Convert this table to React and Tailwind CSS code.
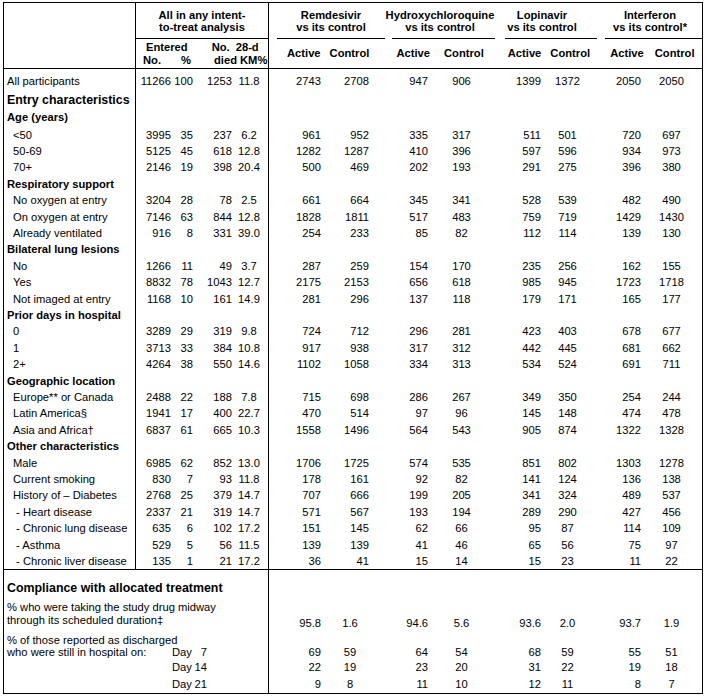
const LEFT = ['w-[35px] text-right', 'w-[22px] text-right', 'w-[39px] text-right', 'w-[34px] text-center']
const RIGHT = [
  'w-[52px] text-right',
  'w-[48px] text-right',
  'w-[59px] text-right',
  'w-[67px] text-center',
  'w-[46px] text-right',
  'w-[53px] text-center',
  'w-[47px] text-right',
  'w-[61px] text-center',
]
const RIGHT_BOTTOM = [
  'w-[52px] text-right',
  'w-[48px] pl-[10px] text-center',
  'w-[59px] text-right',
  'w-[67px] text-center',
  'w-[46px] text-right',
  'w-[53px] text-center',
  'w-[47px] text-right',
  'w-[61px] text-center',
]

const ROW_H = {
  all: 'h-[22px] leading-[24px]',
  h1: 'h-[18px] leading-[18px]',
  age: 'h-[17.5px] leading-[17.5px]',
  std: 'h-[16.42px] leading-[16.42px]',
}

const LABEL = {
  all: 'pl-[3px]',
  h1: 'pl-[3px] font-bold text-[12.4px]',
  h2: 'pl-[3px] font-bold',
  item: 'pl-[9px]',
}

const rows = [
  { label: 'All participants', kind: 'all', h: 'all', v: [11266, 100, 1253, '11.8', 2743, 2708, 947, 906, 1399, 1372, 2050, 2050] },
  { label: 'Entry characteristics', kind: 'h1', h: 'h1' },
  { label: 'Age (years)', kind: 'h2', h: 'age' },
  { label: '<50', v: [3995, 35, 237, '6.2', 961, 952, 335, 317, 511, 501, 720, 697] },
  { label: '50-69', v: [5125, 45, 618, '12.8', 1282, 1287, 410, 396, 597, 596, 934, 973] },
  { label: '70+', v: [2146, 19, 398, '20.4', 500, 469, 202, 193, 291, 275, 396, 380] },
  { label: 'Respiratory support', kind: 'h2' },
  { label: 'No oxygen at entry', v: [3204, 28, 78, '2.5', 661, 664, 345, 341, 528, 539, 482, 490] },
  { label: 'On oxygen at entry', v: [7146, 63, 844, '12.8', 1828, 1811, 517, 483, 759, 719, 1429, 1430] },
  { label: 'Already ventilated', v: [916, 8, 331, '39.0', 254, 233, 85, 82, 112, 114, 139, 130] },
  { label: 'Bilateral lung lesions', kind: 'h2' },
  { label: 'No', v: [1266, 11, 49, '3.7', 287, 259, 154, 170, 235, 256, 162, 155] },
  { label: 'Yes', v: [8832, 78, 1043, '12.7', 2175, 2153, 656, 618, 985, 945, 1723, 1718] },
  { label: 'Not imaged at entry', v: [1168, 10, 161, '14.9', 281, 296, 137, 118, 179, 171, 165, 177] },
  { label: 'Prior days in hospital', kind: 'h2' },
  { label: '0', v: [3289, 29, 319, '9.8', 724, 712, 296, 281, 423, 403, 678, 677] },
  { label: '1', v: [3713, 33, 384, '10.8', 917, 938, 317, 312, 442, 445, 681, 662] },
  { label: '2+', v: [4264, 38, 550, '14.6', 1102, 1058, 334, 313, 534, 524, 691, 711] },
  { label: 'Geographic location', kind: 'h2' },
  { label: 'Europe** or Canada', v: [2488, 22, 188, '7.8', 715, 698, 286, 267, 349, 350, 254, 244] },
  { label: 'Latin America§', v: [1941, 17, 400, '22.7', 470, 514, 97, 96, 145, 148, 474, 478] },
  { label: 'Asia and Africa†', v: [6837, 61, 665, '10.3', 1558, 1496, 564, 543, 905, 874, 1322, 1328] },
  { label: 'Other characteristics', kind: 'h2' },
  { label: 'Male', v: [6985, 62, 852, '13.0', 1706, 1725, 574, 535, 851, 802, 1303, 1278] },
  { label: 'Current smoking', v: [830, 7, 93, '11.8', 178, 161, 92, 82, 141, 124, 136, 138] },
  { label: 'History of – Diabetes', v: [2768, 25, 379, '14.7', 707, 666, 199, 205, 341, 324, 489, 537] },
  { label: ' - Heart disease', v: [2337, 21, 319, '14.7', 571, 567, 193, 194, 289, 290, 427, 456] },
  { label: ' - Chronic lung disease', v: [635, 6, 102, '17.2', 151, 145, 62, 66, 95, 87, 114, 109] },
  { label: ' - Asthma', v: [529, 5, 56, '11.5', 139, 139, 41, 46, 65, 56, 75, 97] },
  { label: ' - Chronic liver disease', v: [135, 1, 21, '17.2', 36, 41, 15, 14, 15, 23, 11, 22] },
]

const Cells = ({ values, classes }) =>
  values.map((v, i) => (
    <div key={i} className={`${classes[i]} shrink-0`}>{v}</div>
  ))

const DataRow = ({ row }) => (
  <div className={`flex ${ROW_H[row.h || 'std']}`}>
    <div className={`w-[132px] shrink-0 border-r border-black whitespace-pre ${LABEL[row.kind || 'item']}`}>
      {row.label}
    </div>
    <div className="w-[133px] shrink-0 border-r border-black flex">
      {row.v && <Cells values={row.v.slice(0, 4)} classes={LEFT} />}
    </div>
    <div className="flex-1 flex">
      {row.v && <Cells values={row.v.slice(4)} classes={RIGHT} />}
    </div>
  </div>
)

const DayRow = ({ day, values }) => (
  <div className="flex h-[17px] leading-[17px]">
    <div className="w-[265px] shrink-0 border-r border-black flex">
      <span className="w-[168px] shrink-0" />
      <span>Day</span>
      <span className="w-[15px] text-right">{day}</span>
    </div>
    <div className="flex-1 flex">
      <Cells values={values} classes={RIGHT_BOTTOM} />
    </div>
  </div>
)

export default function App() {
  return (
    <div className="min-h-screen bg-white pt-[2px] pl-[3px]">
      <div className="w-[700px] border border-black text-black text-[11.2px] whitespace-nowrap font-['Liberation_Sans',Arial,sans-serif]">
        {/* Header */}
        <div className="flex border-b border-black font-bold">
          <div className="w-[132px] shrink-0 border-r border-black" />
          <div className="w-[133px] shrink-0 border-r border-black">
            <div className="h-[36px] border-b border-black flex items-center justify-center text-center leading-[12px]">
              <div>All in any intent-<br />to-treat analysis</div>
            </div>
            <div className="h-[29px] pt-[1.5px] leading-[13px]">
              <div className="flex">
                <span className="ml-[10px]">Entered</span>
                <span className="ml-[24px]">No.</span>
                <span className="ml-[6px]">28-d</span>
              </div>
              <div className="flex">
                <span className="ml-[7px]">No.</span>
                <span className="ml-[20px]">%</span>
                <span className="ml-[23px]">died</span>
                <span className="ml-[3px]">KM%</span>
              </div>
            </div>
          </div>
          <div className="flex-1">
            <div className="flex h-[36px] leading-[12px] text-center">
              <div className="ml-[8px] w-[108px] border-b border-black flex items-center justify-center">
                <div>Remdesivir<br />vs its control</div>
              </div>
              <div className="ml-[7px] w-[103px] border-b border-black flex items-center justify-center pr-[7px]">
                <div>Hydroxychloroquine<br />vs its control</div>
              </div>
              <div className="ml-[10px] w-[92px] border-b border-black flex items-center justify-center pr-[18px]">
                <div>Lopinavir<br />vs its control</div>
              </div>
              <div className="ml-[8px] w-[97px] border-b border-black flex items-center justify-center pr-[7px]">
                <div>Interferon<br />vs its control*</div>
              </div>
            </div>
            <div className="flex h-[29px] items-center">
              <span className="ml-[18px]">Active</span>
              <span className="ml-[9px]">Control</span>
              <span className="ml-[27px]">Active</span>
              <span className="ml-[14px]">Control</span>
              <span className="ml-[24px]">Active</span>
              <span className="ml-[9px]">Control</span>
              <span className="ml-[20px]">Active</span>
              <span className="ml-[11px]">Control</span>
            </div>
          </div>
        </div>

        {/* Body */}
        <div className="border-b border-black">
          {rows.map((row) => (
            <DataRow key={row.label} row={row} />
          ))}
        </div>

        {/* Compliance */}
        <div className="flex h-[30px]">
          <div className="w-[265px] shrink-0 border-r border-black pl-[3px] pt-[10px] leading-[16px] font-bold text-[12.4px]">
            Compliance with allocated treatment
          </div>
          <div className="flex-1" />
        </div>
        <div className="flex h-[30px]">
          <div className="w-[265px] shrink-0 border-r border-black pl-[3px] pt-[1px] leading-[12.5px]">
            <div>% who were taking the study drug midway</div>
            <div>through its scheduled duration‡</div>
          </div>
          <div className="flex-1 flex pt-[17px] leading-[12px]">
            <Cells values={['95.8', '1.6', '94.6', '5.6', '93.6', '2.0', '93.7', '1.9']} classes={RIGHT_BOTTOM} />
          </div>
        </div>
        <div className="flex h-[29px]">
          <div className="w-[265px] shrink-0 border-r border-black pl-[3px] pt-[4px] leading-[12px]">
            <div>% of those reported as discharged</div>
            <div className="flex">
              <span className="w-[165px] shrink-0">who were still in hospital on:</span>
              <span>Day</span>
              <span className="w-[15px] text-right">7</span>
            </div>
          </div>
          <div className="flex-1 flex pt-[16px] leading-[12px]">
            <Cells values={[69, 59, 64, 54, 68, 59, 55, 51]} classes={RIGHT_BOTTOM} />
          </div>
        </div>
        <DayRow day={14} values={[22, 19, 23, 20, 31, 22, 19, 18]} />
        <DayRow day={21} values={[9, 8, 11, 10, 12, 11, 8, 7]} />
      </div>
    </div>
  )
}
